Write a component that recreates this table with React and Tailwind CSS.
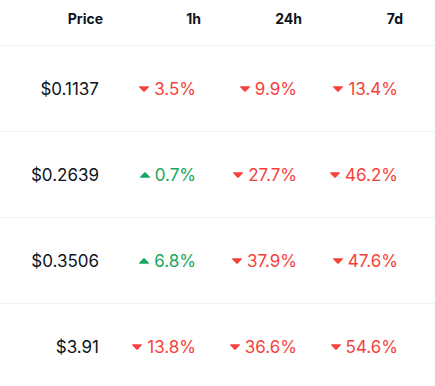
const rows = [
  { price: '$0.1137', h1: [false, '3.5%'], h24: [false, '9.9%'], d7: [false, '13.4%'] },
  { price: '$0.2639', h1: [true, '0.7%'], h24: [false, '27.7%'], d7: [false, '46.2%'] },
  { price: '$0.3506', h1: [true, '6.8%'], h24: [false, '37.9%'], d7: [false, '47.6%'] },
  { price: '$3.91', h1: [false, '13.8%'], h24: [false, '36.6%'], d7: [false, '54.6%'] },
];

function Caret({ up }) {
  return (
    <svg width="10" height="6" viewBox="5 8 14 8" className="mr-[5px]" fill="currentColor">
      {up ? (
        <path d="M18.0566 16H5.94336C5.10459 16 4.68455 14.9782 5.27763 14.3806L11.3343 8.27783C11.7019 7.90739 12.2981 7.90739 12.6657 8.27783L18.7223 14.3806C19.3155 14.9782 18.8954 16 18.0566 16Z" />
      ) : (
        <path d="M5.94336 8H18.0566C18.8954 8 19.3155 9.02183 18.7223 9.61936L12.6657 15.7222C12.2981 16.0926 11.7019 16.0926 11.3343 15.7222L5.27763 9.61936C4.68455 9.02183 5.10459 8 5.94336 8Z" />
      )}
    </svg>
  );
}

function Change({ v }) {
  const [up, text] = v;
  return (
    <div className={`flex items-center justify-end pr-[5px] ${up ? 'text-[#16a860]' : 'text-[#f6413a]'}`}>
      <Caret up={up} />
      <span>{text}</span>
    </div>
  );
}

export default function App() {
  return (
    <div className="w-[435px] h-[386px] overflow-hidden bg-white text-[#0d1421] font-['Inter',sans-serif]">
      {/* Header */}
      <div className="grid grid-cols-[103px_98px_101px_101px] h-[46px] border-b border-[#eff2f5] text-[14px] font-bold leading-5 pt-[9px]">
        <div className="text-right">Price</div>
        <div className="text-right">1h</div>
        <div className="text-right">24h</div>
        <div className="text-right">7d</div>
      </div>

      {rows.map((r) => (
        <div
          key={r.price}
          className="grid grid-cols-[103px_98px_101px_101px] h-[86px] items-center border-b border-[#eff2f5] text-[17px] leading-6"
        >
          <div className="text-right pr-[4px]">{r.price}</div>
          <Change v={r.h1} />
          <Change v={r.h24} />
          <Change v={r.d7} />
        </div>
      ))}
    </div>
  );
}
